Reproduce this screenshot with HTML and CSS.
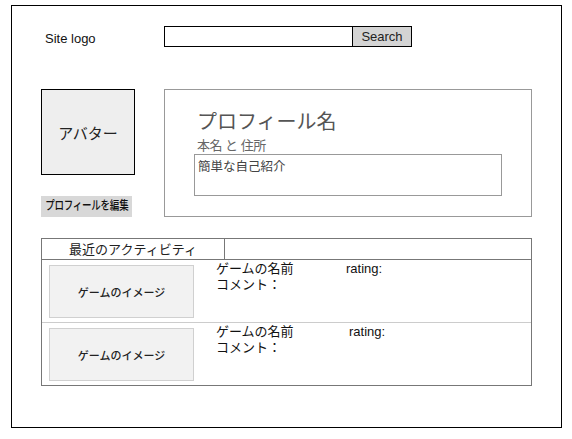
FILE: index.html
```html
<!DOCTYPE html>
<html lang="ja">
<head>
<meta charset="utf-8">
<title>Profile</title>
<link rel="stylesheet" href="styles.css">
</head>
<body>
<div class="frame">
  <header class="top">
    <div class="logo">Site logo</div>
    <div class="search">
      <div class="search-input"></div>
      <div class="search-btn">Search</div>
    </div>
  </header>
  <section class="main">
    <div class="side">
      <div class="avatar">アバター</div>
      <div class="edit-btn"><span class="edit-label">プロフィールを編集</span></div>
    </div>
    <div class="profile">
      <div class="profile-name">プロフィール名</div>
      <div class="profile-sub">本名 と 住所</div>
      <div class="bio">簡単な自己紹介</div>
    </div>
  </section>
  <section class="activity">
    <div class="act-head">
      <div class="act-title">最近のアクティビティ</div>
    </div>
    <div class="act-row">
      <div class="game-img">ゲームのイメージ</div>
      <div class="game-info">
        <div class="line"><span class="gname">ゲームの名前</span><span>rating:</span></div>
        <div class="line">コメント：</div>
      </div>
    </div>
    <div class="act-row">
      <div class="game-img">ゲームのイメージ</div>
      <div class="game-info">
        <div class="line"><span class="gname gname-wide">ゲームの名前</span><span>rating:</span></div>
        <div class="line">コメント：</div>
      </div>
    </div>
  </section>
</div>
</body>
</html>
```
FILE: styles.css
```css
* { box-sizing: border-box; }
html, body { margin: 0; padding: 0; background: #fff; }
body {
  font-family: "Liberation Sans", "Noto Sans CJK JP", sans-serif;
  color: #111;
}
.frame {
  margin: 5px 0 0 11px;
  width: 551px;
  height: 423px;
  border: 1px solid #000;
  padding: 20px 0 0 29px;
}
.top {
  display: flex;
  align-items: center;
  height: 21px;
}
.logo {
  width: 123px;
  padding-left: 4px;
  font-size: 13px;
  line-height: 16px;
  color: #111;
  padding-top: 4px;
}
.search { display: flex; }
.search-input {
  width: 188px;
  height: 21px;
  border: 1px solid #000;
  border-right: none;
  background: #fff;
}
.search-btn {
  width: 60px;
  height: 21px;
  border: 1px solid #000;
  background: #d4d4d4;
  font-size: 13px;
  line-height: 19px;
  text-align: center;
  color: #222;
}
.main {
  display: flex;
  gap: 29px;
  margin-top: 42px;
}
.side {
  width: 94px;
  display: flex;
  flex-direction: column;
  gap: 21px;
}
.avatar {
  width: 94px;
  height: 86px;
  border: 1px solid #000;
  background: #eeeeee;
  display: flex;
  align-items: center;
  justify-content: center;
  font-size: 15px;
  color: #222;
}
.edit-btn {
  width: 91px;
  height: 21px;
  background: #d8d8d8;
  display: flex;
  align-items: center;
  justify-content: center;
  overflow: hidden;
}
.edit-label {
  display: inline-block;
  white-space: nowrap;
  font-size: 12.5px;
  line-height: 21px;
  color: #111;
  font-weight: 500;
  transform: scaleX(0.76);
  letter-spacing: -0.3px;
}
.profile {
  width: 368px;
  height: 128px;
  border: 1px solid #999;
  padding: 20px 0 0 32px;
}
.profile-name {
  font-size: 20px;
  line-height: 24px;
  color: #555;
}
.profile-sub {
  font-size: 13px;
  line-height: 16px;
  color: #666;
  margin-top: 4px;
  letter-spacing: -0.5px;
}
.bio {
  margin-left: -3px;
  width: 308px;
  height: 42px;
  border: 1px solid #999;
  padding: 5px 3px 3px;
  font-size: 12.5px;
  line-height: 14px;
  color: #444;
}
.activity {
  margin-top: 21px;
  width: 491px;
  height: 148px;
  border: 1px solid #777;
}
.act-head {
  height: 21px;
  border-bottom: 1px solid #777;
  display: flex;
}
.act-title {
  width: 183px;
  border-right: 1px solid #777;
  text-align: center;
  font-size: 13px;
  line-height: 22px;
  color: #222;
}
.act-row {
  height: 63px;
  display: flex;
  gap: 22px;
  padding: 5px 0 0 7px;
  border-bottom: 1px solid #ccc;
}
.act-row:last-child { border-bottom: none; height: 62px; }
.game-img {
  width: 145px;
  height: 53px;
  background: #f2f2f2;
  border: 1px solid #d0d0d0;
  display: flex;
  align-items: center;
  justify-content: center;
  font-size: 11px;
  color: #222;
  font-weight: 500;
}
.game-info {
  margin-top: -4px;
  font-size: 13px;
  line-height: 16px;
  color: #111;
}
.line { display: flex; }
.gname { width: 130px; }
.gname-wide { width: 133px; }
```
